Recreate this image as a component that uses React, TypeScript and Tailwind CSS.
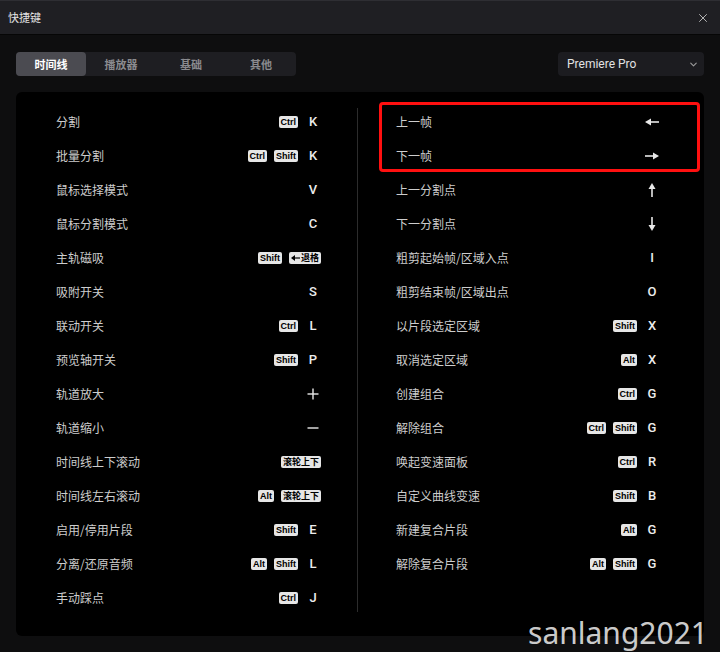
import { X, ChevronDown } from "lucide-react";

type Row = { label: string; keys: string[] };

const leftRows: Row[] = [
  { label: "分割", keys: ["Ctrl", "K"] },
  { label: "批量分割", keys: ["Ctrl", "Shift", "K"] },
  { label: "鼠标选择模式", keys: ["V"] },
  { label: "鼠标分割模式", keys: ["C"] },
  { label: "主轨磁吸", keys: ["Shift", "[退格]"] },
  { label: "吸附开关", keys: ["S"] },
  { label: "联动开关", keys: ["Ctrl", "L"] },
  { label: "预览轴开关", keys: ["Shift", "P"] },
  { label: "轨道放大", keys: ["plus"] },
  { label: "轨道缩小", keys: ["minus"] },
  { label: "时间线上下滚动", keys: ["[滚轮上下]"] },
  { label: "时间线左右滚动", keys: ["Alt", "[滚轮上下]"] },
  { label: "启用/停用片段", keys: ["Shift", "E"] },
  { label: "分离/还原音频", keys: ["Alt", "Shift", "L"] },
  { label: "手动踩点", keys: ["Ctrl", "J"] },
];

const rightRows: Row[] = [
  { label: "上一帧", keys: ["left"] },
  { label: "下一帧", keys: ["right"] },
  { label: "上一分割点", keys: ["up"] },
  { label: "下一分割点", keys: ["down"] },
  { label: "粗剪起始帧/区域入点", keys: ["I"] },
  { label: "粗剪结束帧/区域出点", keys: ["O"] },
  { label: "以片段选定区域", keys: ["Shift", "X"] },
  { label: "取消选定区域", keys: ["Alt", "X"] },
  { label: "创建组合", keys: ["Ctrl", "G"] },
  { label: "解除组合", keys: ["Ctrl", "Shift", "G"] },
  { label: "唤起变速面板", keys: ["Ctrl", "R"] },
  { label: "自定义曲线变速", keys: ["Shift", "B"] },
  { label: "新建复合片段", keys: ["Alt", "G"] },
  { label: "解除复合片段", keys: ["Alt", "Shift", "G"] },
];

const tabs = ["时间线", "播放器", "基础", "其他"];

const Badge = ({ text }: { text: string }) => (
  <span className="h-[12px] px-[2px] rounded-[2px] bg-[#e6e6e6] text-black text-[9px] font-bold leading-[12px] flex items-center gap-[1px] font-['Liberation_Sans','Noto_Sans_CJK_SC',sans-serif]">
    {text === "退格" && (
      <svg width="9" height="8" viewBox="0 0 9 8">
        <line x1="3" y1="4" x2="9" y2="4" stroke="#000" strokeWidth="1.2" />
        <polygon points="0,4 4,1 4,7" fill="#000" />
      </svg>
    )}
    {text}
  </span>
);

const Arrow = ({ dir }: { dir: string }) => {
  const rot = { left: 180, right: 0, up: -90, down: 90 }[dir] ?? 0;
  return (
    <svg width="16" height="16" viewBox="0 0 16 16" style={{ transform: `rotate(${rot}deg)` }}>
      <line x1="1" y1="8" x2="11" y2="8" stroke="#e8e8e8" strokeWidth="1.6" />
      <polygon points="9,4.5 15,8 9,11.5" fill="#e8e8e8" />
    </svg>
  );
};

const MainKey = ({ k }: { k: string }) => {
  if (k.startsWith("[")) return <Badge text={k.slice(1, -1)} />;
  if (["left", "right", "up", "down"].includes(k))
    return (
      <span className="w-[16px] flex justify-center">
        <Arrow dir={k} />
      </span>
    );
  if (k === "plus" || k === "minus")
    return (
      <span className="w-[16px] flex justify-center">
        <svg width="12" height="12" viewBox="0 0 12 12">
          <line x1="0.5" y1="6" x2="11.5" y2="6" stroke="#e8e8e8" strokeWidth="1.4" />
          {k === "plus" && <line x1="6" y1="0.5" x2="6" y2="11.5" stroke="#e8e8e8" strokeWidth="1.4" />}
        </svg>
      </span>
    );
  return (
    <span className="w-[16px] text-center text-[13px] font-medium text-[#ececec] font-['Roboto',sans-serif]">
      {k}
    </span>
  );
};

const ShortcutRow = ({ row }: { row: Row }) => {
  const mods = row.keys.slice(0, -1);
  const main = row.keys[row.keys.length - 1];
  return (
    <div className="h-[34px] flex items-center justify-between">
      <span className="text-[12px] text-[#cdcdcd]">{row.label}</span>
      <div className="flex items-center gap-[7px]">
        {mods.map((m) => (
          <Badge key={m} text={m} />
        ))}
        <MainKey k={main} />
      </div>
    </div>
  );
};

export default function App() {
  return (
    <div className="w-[720px] h-[652px] bg-[#0e0e0f] flex flex-col relative overflow-hidden font-['Noto_Sans_CJK_SC','Noto_Sans',sans-serif]">
      {/* Header */}
      <div className="h-[35px] shrink-0 bg-[#1f1f23] border-t border-[#2e2e33] border-b border-b-[#060606] flex items-center justify-between pl-[8px] pr-[10px]">
        <span className="text-[11px] text-[#e4e4e4]">快捷键</span>
        <X className="w-[14px] h-[14px] text-[#c8c8c8]" strokeWidth={1.5} />
      </div>

      <div className="flex-1 px-[16px] pt-[17px] flex flex-col">
        {/* Tabs + preset */}
        <div className="flex items-center justify-between h-[24px]">
          <div className="flex h-[24px] w-[280px] rounded-[4px] bg-[#1e1e22]">
            {tabs.map((t, i) => (
              <div
                key={t}
                className={
                  i === 0
                    ? "w-[70px] h-full rounded-[4px] bg-[#4b4b51] text-white text-[11px] font-bold flex items-center justify-center"
                    : "w-[70px] h-full text-[#8a8a8e] text-[11px] font-bold flex items-center justify-center"
                }
              >
                {t}
              </div>
            ))}
          </div>
          <div className="w-[146px] h-[24px] rounded-[4px] bg-[#1c1c20] flex items-center justify-between pl-[9px] pr-[5px]">
            <span className="text-[12px] text-[#e2e2e2] font-['Roboto',sans-serif]">Premiere Pro</span>
            <ChevronDown className="w-[11px] h-[11px] text-[#9a9a9a]" strokeWidth={2.5} />
          </div>
        </div>

        {/* Panel */}
        <div className="mt-[16px] h-[544px] bg-black rounded-[6px] flex pt-[13px] pb-[21px] relative">
          <div className="w-[341px] pl-[40px] pr-[36px]">
            {leftRows.map((r) => (
              <ShortcutRow key={r.label} row={r} />
            ))}
          </div>
          <div className="w-px mt-[3px] mb-[3px] bg-[#2c2c2c]" />
          <div className="flex-1 pl-[38px] pr-[44px]">
            {rightRows.map((r) => (
              <ShortcutRow key={r.label} row={r} />
            ))}
          </div>

          {/* highlight */}
          <div className="absolute left-[363px] top-[10px] w-[321px] h-[70px] border-[3px] border-[#ff1010] rounded-[4px]" />
        </div>
      </div>

      {/* watermark */}
      <span className="absolute right-[12px] bottom-[4px] text-[30px] leading-none text-[#e6e6e6]/90 font-['Noto_Sans',sans-serif]">
        sanlang2021
      </span>
    </div>
  );
}
